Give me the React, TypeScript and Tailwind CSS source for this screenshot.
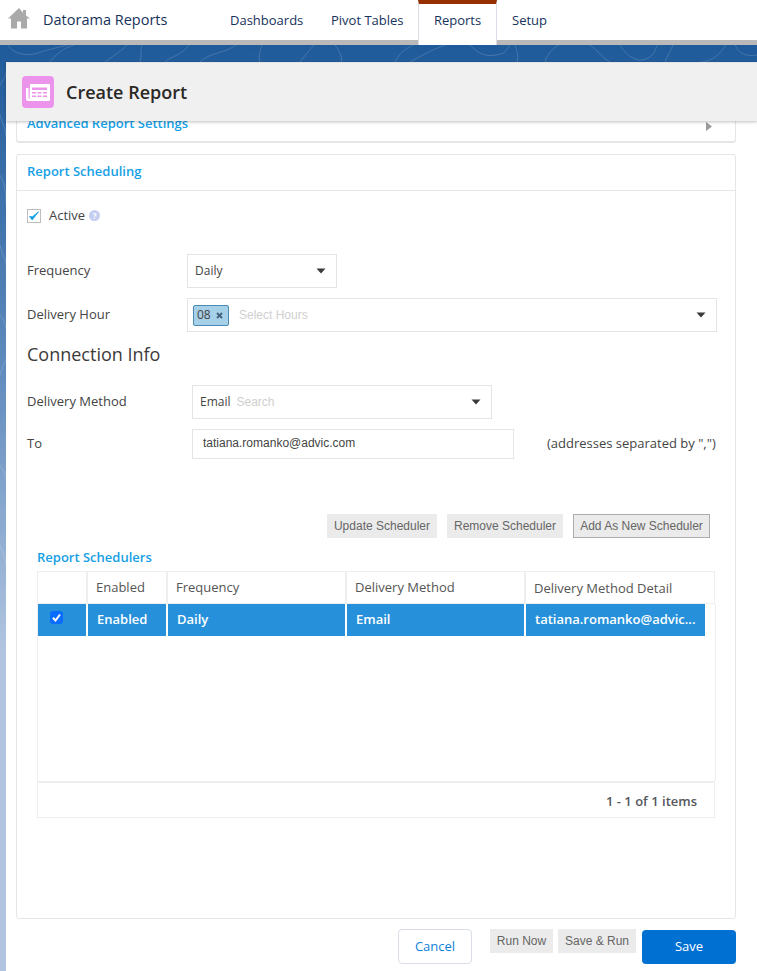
import React from "react";

const Caret = () => (
  <svg width="10" height="6" viewBox="0 0 10 6" className="shrink-0">
    <path d="M0.5 0.5h9L5 5.5z" fill="#3a3a3a" />
  </svg>
);

const GrayButton: React.FC<{ label: string; className: string }> = ({ label, className }) => (
  <button className={`h-6 bg-[#ebebeb] text-[12px] text-[#666] font-['Liberation_Sans',sans-serif] ${className}`}>
    {label}
  </button>
);

const Contours = () => (
  <svg className="absolute inset-0 w-full h-full" viewBox="0 0 757 926" preserveAspectRatio="none" fill="none" stroke="#ffffff" strokeOpacity="0.16">
    <path d="M8 0c4 8 18 12 30 8s22-6 30-8M50 17c6-8 14-14 24-17M105 17c8-6 18-12 22-17M140 17c2-6 0-12 2-17M165 17c6-6 16-6 24-17M200 17c10-10 24-8 36-17M262 0c-2 6-4 12-2 17M300 17c4-6 10-12 14-17M335 0c4 6 8 12 6 17M395 17c4-8 8-12 18-17M410 17c14-8 26-14 36-17M470 0c8 8 14 12 26 10s10-6 14-10M515 0c2 6 4 12 2 17M545 17c2-8 8-14 14-17M590 0c8 6 14 14 20 17M620 0c6 10 16 18 26 14s8-10 12-14M665 17c2-6 6-12 8-17M700 17c12 0 20-8 26-17M735 0c4 8 10 12 22 10" />
    <path d="M0 40c4-6 6-10 6-14M0 70c2 8 6 14 6 22M0 130c4 8 6 14 6 30M0 200c2 10 6 14 6 20M0 270c4 4 5 8 6 14M0 330c2-6 4-12 6-16M0 420c3 6 6 8 6 14M0 500c2 8 6 12 6 20" />
  </svg>
);

const NavItem: React.FC<{ label: string; className: string }> = ({ label, className }) => (
  <span className={`text-[13px] text-[#16325c] leading-[40px] ${className}`}>{label}</span>
);

const HeaderCell: React.FC<{ label: string; className: string }> = ({ label, className }) => (
  <div className={`h-full border-r-2 border-[#eeeeee] text-[13px] text-[#555] pl-[8px] leading-[31px] ${className}`}>{label}</div>
);

const RowCell: React.FC<{ label: string; className: string }> = ({ label, className }) => (
  <div className={`h-full border-r-2 border-white text-[13px] font-semibold text-white pl-[9px] leading-[31px] truncate ${className}`}>{label}</div>
);

export default function App() {
  return (
    <div className="w-[757px] h-[971px] overflow-hidden flex flex-col bg-white font-['Open_Sans',sans-serif]">
      {/* top nav */}
      <nav className="h-[45px] shrink-0 flex bg-white shadow-[inset_0_-5px_0_#b9b9b9]">
        <svg width="22" height="21" viewBox="0 0 22 21" className="ml-[8px] mt-[8px]">
          <path d="M11 0L0 10.5h3V20.5h6v-7h4v7h6V10.5h3L18 7.6V2h-3v2.8z" fill="#a9aaa9" />
        </svg>
        <span className="ml-[13px] text-[14.5px] text-[#16325c] leading-[40px] w-[187px]">Datorama Reports</span>
        <NavItem label="Dashboards" className="w-[101px]" />
        <NavItem label="Pivot Tables" className="w-[87px]" />
        <div className="w-[79px] h-[45px] bg-white border-x border-[#d8dde6] border-t-[4px] border-t-[#963000] text-center text-[13px] text-[#16325c] leading-[33px]">
          Reports
        </div>
        <NavItem label="Setup" className="ml-[15px]" />
      </nav>

      {/* blue backdrop */}
      <div className="relative flex-1 pt-[17px] pl-[6px] bg-[linear-gradient(180deg,#1f5a9a_0%,#5f8bbd_35%,#b0c4e0_65%,#b0c4e0_100%)]">
        <Contours />
        <div className="relative h-full bg-white flex flex-col">
          <header className="relative z-10 h-[59px] shrink-0 bg-[#f0f0f0] border-t border-[#e4e4e4] shadow-[0_1px_3px_rgba(0,0,0,0.25)] flex items-center pl-[16px]">
            <div className="w-[32px] h-[32px] rounded-[4px] bg-[#ec94eb] flex items-center justify-center">
              <svg width="24" height="18" viewBox="0 0 24 18">
                <path d="M4 1h19a1 1 0 0 1 1 1v15a1 1 0 0 1-1 1H2a2 2 0 0 1-2-2V5h2.5v11h1z" fill="#fff" />
                <path d="M6 4.5h15v2.5H6zM6 9h4v1.5H6zM11.5 9h4v1.5h-4zM17 9h4v1.5h-4zM6 12.5h4V14H6zM11.5 12.5h4V14h-4zM17 12.5h4V14h-4z" fill="#ec94eb" />
              </svg>
            </div>
            <h1 className="ml-[12px] text-[18px] font-semibold text-[#2b2826]">Create Report</h1>
          </header>

          <div className="flex-1 flex flex-col pl-[10px] pr-[21px]">
            {/* collapsed settings card, top cut off by header */}
            <div className="h-[22px] shrink-0 overflow-hidden border-x border-b-2 border-[#e6e6e6] rounded-b-[3px] flex justify-between pl-[10px] pr-[23px]">
              <span className="text-[13px] font-semibold text-[#16a0e6] leading-[18px] -mt-[7px]">Advanced Report Settings</span>
              <svg width="6" height="9" viewBox="0 0 6 9" className="mt-[1px]">
                <path d="M0 0l6 4.5L0 9z" fill="#9a9a9a" />
              </svg>
            </div>

            {/* scheduling card */}
            <section className="mt-[11px] h-[765px] shrink-0 border border-[#e6e6e6] rounded-[3px]">
              <div className="h-[36px] border-b border-[#e6e6e6] pl-[10px] text-[13px] font-semibold text-[#16a0e6] leading-[32px]">
                Report Scheduling
              </div>

              <div className="mt-[17px] ml-[10px] flex items-center h-[15px]">
                <span className="w-[14px] h-[14px] border border-[#bdbdbd] flex items-center justify-center">
                  <svg width="10" height="10" viewBox="0 0 10 10">
                    <path d="M0.5 5.5L3.2 9L9.5 0.8L3.4 5.8z" fill="#16a0e6" stroke="#16a0e6" strokeWidth="0.8" />
                  </svg>
                </span>
                <span className="ml-[8px] text-[13px] text-[#444]">Active</span>
                <span className="ml-[4px] w-[11px] h-[11px] rounded-full bg-[#c5cdf3] text-white text-[8px] font-bold leading-[11px] text-center">?</span>
              </div>

              <div className="mt-[31px] flex items-center">
                <label className="ml-[10px] w-[160px] text-[13px] text-[#444]">Frequency</label>
                <div className="w-[150px] h-[34px] border border-[#e4e4e4] flex items-center justify-between pl-[7px] pr-[10px] text-[12px] text-[#444]">
                  Daily
                  <Caret />
                </div>
              </div>

              <div className="mt-[10px] flex items-center">
                <label className="ml-[10px] w-[160px] text-[13px] text-[#444]">Delivery Hour</label>
                <div className="w-[530px] h-[34px] border border-[#e4e4e4] flex items-center pl-[5px] pr-[10px]">
                  <span className="w-[36px] h-[21px] rounded-[2px] bg-[#a6cfe8] border border-[#4a8ab5] flex items-center pl-[3px] text-[12px] text-[#444]">
                    08
                    <svg width="7" height="7" viewBox="0 0 7 7" className="ml-[5px]">
                      <path d="M1 1l5 5M6 1L1 6" stroke="#44607c" strokeWidth="1.8" />
                    </svg>
                  </span>
                  <span className="ml-[10px] flex-1 text-[12px] text-[#cfcfcf] font-['Liberation_Sans',sans-serif]">Select Hours</span>
                  <Caret />
                </div>
              </div>

              <h2 className="mt-[8px] ml-[10px] text-[18px] text-[#3b3b3b] leading-[28px]">Connection Info</h2>

              <div className="mt-[17px] flex items-center">
                <label className="ml-[10px] w-[165px] text-[13px] text-[#444]">Delivery Method</label>
                <div className="w-[300px] h-[34px] border border-[#e4e4e4] flex items-center pl-[7px] pr-[10px]">
                  <span className="text-[12px] text-[#444]">Email</span>
                  <span className="ml-[6px] flex-1 text-[12px] text-[#cfcfcf] font-['Liberation_Sans',sans-serif]">Search</span>
                  <Caret />
                </div>
              </div>

              <div className="mt-[10px] flex items-center">
                <label className="ml-[10px] w-[165px] text-[13px] text-[#444]">To</label>
                <div className="w-[322px] h-[30px] border border-[#e4e4e4] pl-[10px] text-[12px] text-[#444] leading-[27px] font-['Liberation_Sans',sans-serif]">
                  tatiana.romanko@advic.com
                </div>
                <span className="ml-[33px] text-[13px] text-[#444]">(addresses separated by ",")</span>
              </div>

              <div className="mt-[55px] flex ml-[310px]">
                <GrayButton label="Update Scheduler" className="w-[110px]" />
                <GrayButton label="Remove Scheduler" className="ml-[10px] w-[116px]" />
                <GrayButton label="Add As New Scheduler" className="ml-[10px] w-[137px] border border-[#adadad]" />
              </div>

              {/* schedulers grid */}
              <div className="ml-[20px] mt-[10px] w-[679px]">
                <div className="text-[13px] font-semibold text-[#16a0e6] leading-[18px]">Report Schedulers</div>
                <div className="mt-[5px] h-[33px] w-[678px] border border-[#eeeeee] flex">
                  <HeaderCell label="" className="w-[50px]" />
                  <HeaderCell label="Enabled" className="w-[80px]" />
                  <HeaderCell label="Frequency" className="w-[179px]" />
                  <HeaderCell label="Delivery Method" className="w-[179px]" />
                  <div className="text-[13px] text-[#555] pl-[8px] leading-[32px]">Delivery Method Detail</div>
                </div>
                <div className="h-[177px] w-[679px] border-l border-r border-[#eeeeee]">
                  <div className="h-[32px] w-[667px] bg-[#2691da] flex">
                    <div className="w-[50px] h-full border-r-2 border-white pl-[12px] pt-[7px]">
                      <span className="w-[13px] h-[13px] rounded-[3px] bg-[#0a6cff] flex items-center justify-center">
                        <svg width="9" height="9" viewBox="0 0 9 9">
                          <path d="M1 4.8L3.5 7.5L8 1.5" fill="none" stroke="#fff" strokeWidth="2" />
                        </svg>
                      </span>
                    </div>
                    <RowCell label="Enabled" className="w-[80px]" />
                    <RowCell label="Daily" className="w-[179px]" />
                    <RowCell label="Email" className="w-[179px]" />
                    <div className="flex-1 text-[13px] font-semibold text-white pl-[9px] leading-[31px] truncate">tatiana.romanko@advic...</div>
                  </div>
                </div>
                <div className="h-[37px] w-[678px] border border-t-2 border-[#eeeeee] text-right pr-[17px] text-[13px] font-semibold text-[#54585c] leading-[36px]">
                  1 - 1 of 1 items
                </div>
              </div>
            </section>

            {/* footer actions */}
            <div className="mt-[10px] flex">
              <button className="ml-[382px] w-[74px] h-[35px] rounded-[4px] border border-[#d8dde6] text-[13px] text-[#0d7fd9]">Cancel</button>
              <GrayButton label="Run Now" className="ml-[18px] w-[63px]" />
              <GrayButton label="Save & Run" className="ml-[5px] w-[78px]" />
              <button className="ml-[6px] mt-[1px] w-[94px] h-[34px] rounded-[4px] bg-[#0070d2] text-[13px] text-white">Save</button>
            </div>
          </div>
        </div>
      </div>
    </div>
  );
}
